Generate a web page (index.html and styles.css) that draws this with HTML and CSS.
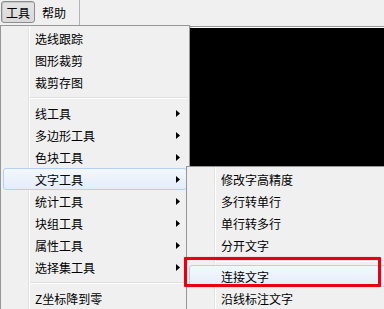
FILE: index.html
```html
<!DOCTYPE html>
<html lang="zh-CN">
<head>
<meta charset="utf-8">
<title>菜单</title>
<link rel="stylesheet" href="styles.css">
</head>
<body>
<div class="app">
  <div class="menubar">
    <div class="mb-item pressed">工具</div>
    <div class="mb-item">帮助</div>
    <div class="mb-divider"></div>
  </div>
  <div class="workspace">
    <div class="canvas"></div>
  </div>

  <div class="menu main-menu">
    <div class="item"><span>选线跟踪</span></div>
    <div class="item"><span>图形裁剪</span></div>
    <div class="item"><span>裁剪存图</span></div>
    <div class="sep"></div>
    <div class="item"><span>线工具</span><svg class="arrow" width="4" height="7" viewBox="0 0 4 7"><polygon points="0,0 4,3.5 0,7"/></svg></div>
    <div class="item"><span>多边形工具</span><svg class="arrow" width="4" height="7" viewBox="0 0 4 7"><polygon points="0,0 4,3.5 0,7"/></svg></div>
    <div class="item"><span>色块工具</span><svg class="arrow" width="4" height="7" viewBox="0 0 4 7"><polygon points="0,0 4,3.5 0,7"/></svg></div>
    <div class="item hl"><span>文字工具</span><svg class="arrow" width="4" height="7" viewBox="0 0 4 7"><polygon points="0,0 4,3.5 0,7"/></svg></div>
    <div class="item"><span>统计工具</span><svg class="arrow" width="4" height="7" viewBox="0 0 4 7"><polygon points="0,0 4,3.5 0,7"/></svg></div>
    <div class="item"><span>块组工具</span><svg class="arrow" width="4" height="7" viewBox="0 0 4 7"><polygon points="0,0 4,3.5 0,7"/></svg></div>
    <div class="item"><span>属性工具</span><svg class="arrow" width="4" height="7" viewBox="0 0 4 7"><polygon points="0,0 4,3.5 0,7"/></svg></div>
    <div class="item"><span>选择集工具</span><svg class="arrow" width="4" height="7" viewBox="0 0 4 7"><polygon points="0,0 4,3.5 0,7"/></svg></div>
    <div class="sep"></div>
    <div class="item"><span>Z坐标降到零</span></div>
  </div>

  <div class="menu sub-menu">
    <div class="item"><span>修改字高精度</span></div>
    <div class="item"><span>多行转单行</span></div>
    <div class="item"><span>单行转多行</span></div>
    <div class="item"><span>分开文字</span></div>
    <div class="sep"></div>
    <div class="item hl"><span>连接文字</span></div>
    <div class="item"><span>沿线标注文字</span></div>
  </div>

  <div class="annotation"></div>
</div>
</body>
</html>
```
FILE: styles.css
```css
html, body {
  margin: 0;
  padding: 0;
}
body {
  width: 384px;
  height: 309px;
  overflow: hidden;
  background: #f0f0f0;
  font-family: "Noto Sans CJK SC", "Microsoft YaHei", sans-serif;
  font-size: 12px;
  color: #000;
}
.app {
  position: relative;
  width: 384px;
  height: 309px;
  overflow: hidden;
  display: flex;
  flex-direction: column;
  background: #f0f0f0;
}
.menubar {
  height: 26px;
  display: flex;
  align-items: flex-start;
  padding: 1px 0 0 1px;
  box-sizing: border-box;
}
.mb-item {
  height: 22px;
  line-height: 21px;
  padding: 0 6px;
  box-sizing: border-box;
  border: 1px solid transparent;
}
.mb-item.pressed {
  width: 34px;
  padding: 0;
  text-align: center;
  border-color: #8a8c8e;
  border-radius: 3px;
  background: linear-gradient(#e4e4e4, #dadada);
  box-shadow: inset 1px 1px 0 #c8c8c8;
}
.mb-divider {
  margin-left: 6px;
  margin-top: -1px;
  height: 26px;
  border-left: 1px solid #b4b4b4;
}
.workspace {
  flex: 1;
  border-top: 1px solid #9a9a9a;
  padding-left: 120px;
}
.canvas {
  height: 100%;
  background: #000;
  border-top: 1px solid #ffffff;
  border-left: 1px solid #9a9a9a;
}

.menu {
  position: absolute;
  box-sizing: border-box;
  background:
    linear-gradient(to right, transparent 27px, #e2e3e3 27px, #e2e3e3 28px, #ffffff 28px, #ffffff 29px, transparent 29px),
    #f0f0f0;
  border: 1px solid #979797;
  padding: 1px 2px;
  box-shadow: 2px 2px 2px rgba(0, 0, 0, 0.28);
}
.main-menu {
  left: 0;
  top: 25px;
  width: 190px;
}
.sub-menu {
  left: 186px;
  top: 166px;
  width: 214px;
}
.item {
  height: 22px;
  box-sizing: border-box;
  border: 1px solid transparent;
  border-radius: 3px;
  display: flex;
  align-items: center;
  padding-left: 31px;
  white-space: nowrap;
}
.item.hl {
  border-color: #b2d1f3;
  background: linear-gradient(#f4f8fd, #e4edfa);
}
.arrow {
  margin-left: auto;
  margin-right: 6px;
  fill: #000;
}
.sep {
  height: 9px;
  margin-left: 27px;
  background: linear-gradient(transparent 4px, #e0e0e0 4px, #e0e0e0 5px, #ffffff 5px, #ffffff 6px, transparent 6px);
}
.annotation {
  position: absolute;
  left: 184px;
  top: 257px;
  width: 197px;
  height: 30px;
  box-sizing: border-box;
  border: 3px solid #e60012;
  border-radius: 1px;
  box-shadow: 0 0 1px rgba(230, 0, 18, 0.6);
}
```
